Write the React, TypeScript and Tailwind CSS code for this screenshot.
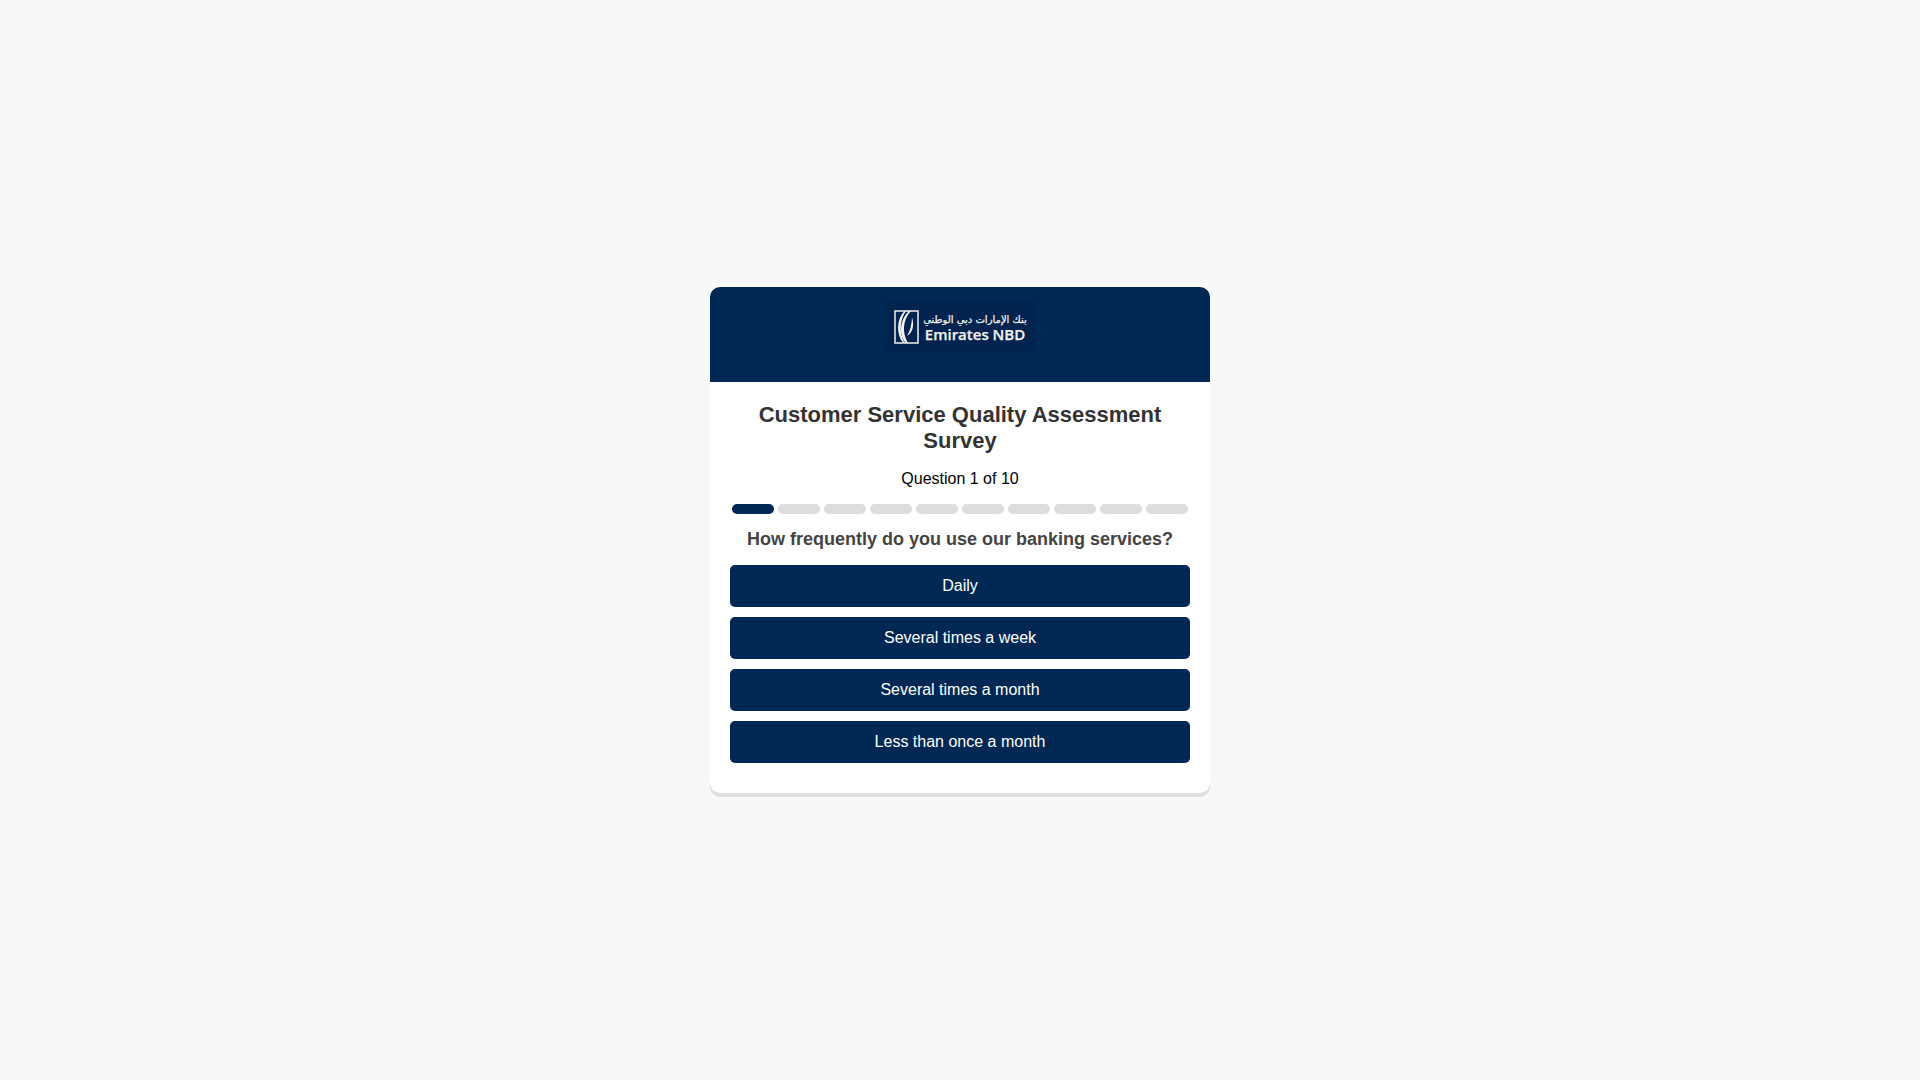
import React, { useState } from 'react';
import clsx from 'clsx';

const TOTAL_QUESTIONS = 10;

const options = [
	'Daily',
	'Several times a week',
	'Several times a month',
	'Less than once a month'
];

const Logo: React.FC = () => (
	<svg
		width="150"
		height="50"
		viewBox="0 0 150 50"
		role="img"
		aria-label="Emirates NBD"
		className="bg-[#002350]"
	>
		<rect x="10" y="9" width="23" height="32" fill="none" stroke="#f3f1ee" strokeWidth="1.5" />
		<g fill="#f3f1ee">
			<path d="M19.5 9C11.500 17 11 32 18 41H19.500C14 31 14.500 18 21 9Z" />
			<path d="M24 9C14.500 18 13.500 32 20.500 41H23C17 31 17.500 18 26 9Z" />
			<path d="M27 15.500C29.500 23 28 30.500 22 34C25 29 26.800 23 27 15.500Z" />
		</g>
		<text
			x="90"
			y="21"
			textAnchor="middle"
			direction="rtl"
			fill="#f3f1ee"
			stroke="#f3f1ee"
			strokeWidth="0.25"
			className="font-['DejaVu_Sans',sans-serif] text-[10px]"
		>
			بنك الإمارات دبي الوطني
		</text>
		<text
			x="90"
			y="38"
			textAnchor="middle"
			fill="#f3f1ee"
			stroke="#f3f1ee"
			strokeWidth="0.25"
			className="font-['Open_Sans',sans-serif] text-[15px] font-semibold"
		>
			Emirates NBD
		</text>
	</svg>
);

interface ProgressProps {
	current: number;
	total: number;
}

const Progress: React.FC<ProgressProps> = ({ current, total }) => (
	<div className="flex mt-4 mb-[15px]">
		{Array.from({ length: total }, (_, i) => (
			<div
				key={i}
				className={clsx(
					'flex-1 h-2.5 mx-0.5 rounded-full',
					i < current ? 'bg-[#002855]' : 'bg-[#dddddd]'
				)}
			/>
		))}
	</div>
);

const App: React.FC = () => {
	const [answer, setAnswer] = useState<string | null>(null);

	return (
		<div className="min-h-screen flex items-center justify-center bg-[#f8f8f8] font-['Liberation_Sans',Arial,sans-serif]">
			<main className="w-full max-w-[500px] bg-white rounded-[10px] overflow-hidden text-center shadow-[0_4px_0_rgba(0,0,0,0.1)]">
				<header className="flex justify-center bg-[#002855] pt-[15px] pb-[30px]">
					<Logo />
				</header>
				<div className="px-5 pt-5 pb-[30px]">
					<h1 className="text-[22px] leading-[26px] font-bold text-[#333333]">
						Customer Service Quality Assessment Survey
					</h1>
					<p className="mt-4 text-base leading-[18px] text-black">
						Question 1 of {TOTAL_QUESTIONS}
					</p>
					<Progress current={1} total={TOTAL_QUESTIONS} />
					<h2 className="text-[18px] leading-[21px] font-bold text-[#444444]">
						How frequently do you use our banking services?
					</h2>
					<div className="mt-[15px] flex flex-col gap-2.5">
						{options.map((option) => (
							<button
								key={option}
								type="button"
								aria-pressed={answer === option}
								className="w-full h-[42px] rounded-[5px] bg-[#002855] text-base text-white cursor-pointer"
								onClick={() => setAnswer(option)}
							>
								{option}
							</button>
						))}
					</div>
				</div>
			</main>
		</div>
	);
};

export default App;
